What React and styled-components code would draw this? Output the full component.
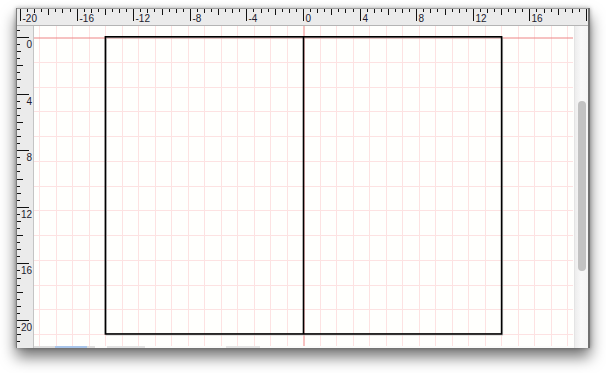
import React from 'react';
import styled, { createGlobalStyle } from 'styled-components';

const UNIT = 14.15;

const GlobalStyle = createGlobalStyle`
  html, body {
    margin: 0;
    background: #ffffff;
    font-family: "Liberation Sans", Arial, sans-serif;
  }
`;

const Stage = styled.div`
  padding: 8px 0 30px 16px;
`;

const Window = styled.div`
  position: relative;
  width: 571px;
  display: flex;
  flex-direction: column;
  border-left: 1px solid #7c7c7c;
  border-right: 2px solid #707070;
  background: #fefefc;
  box-shadow: 0 9px 14px rgba(0, 0, 0, 0.55), 0 0 4px rgba(0, 0, 0, 0.3);
`;

const TopRuler = styled.div`
  height: 16px;
  background: #ebebeb;
  border-top: 1px solid #9c9c9c;
  border-bottom: 1px solid #b4b4b4;

  svg {
    display: block;
  }
`;

const Body = styled.div`
  display: flex;
  height: 322px;
`;

const LeftRuler = styled.div`
  width: 16px;
  background: #ebebeb;
  border-right: 1px solid #c4c4c4;

  svg {
    display: block;
  }
`;

const CanvasColumn = styled.div`
  flex: 1;
  display: flex;
  flex-direction: column;
`;

const Canvas = styled.div`
  height: 320px;
  background: #fffffd;

  svg {
    display: block;
  }
`;

const HScroll = styled.div`
  height: 2px;
  display: flex;
  background: #fbfbfa;
`;

const Segment = styled.div`
  width: ${p => p.$w}px;
  background: ${p => p.$c};
`;

const VScroll = styled.div`
  width: 14px;
  padding: 75px 3px 0 3px;
  box-sizing: border-box;
  border-left: 1px solid #e4e4e4;
  background: linear-gradient(to right, #ededed, #f8f8f8 45%, #f4f4f4);
`;

const Thumb = styled.div`
  width: 8px;
  height: 170px;
  border-radius: 4px;
  background: #c2c2c2;
`;

const Label = styled.text`
  font-family: "Liberation Sans", Arial, sans-serif;
  font-size: 10px;
  fill: #1b1b2e;
`;

const tickLen = h => (h % 8 === 0 ? 12 : h % 4 === 0 ? 6 : h % 2 === 0 ? 4 : 3);

function HorizontalRuler() {
  const ticks = [];
  const labels = [];
  for (let h = -42; h <= 42; h++) {
    const x = 286 + (h / 2) * UNIT;
    if (x < 0 || x > 571) continue;
    const px = Math.round(x) + 0.5;
    ticks.push(<line key={h} x1={px} x2={px} y1={0} y2={tickLen(h)} stroke="#111" strokeWidth="1" />);
    if (h % 8 === 0 && px < 555) {
      labels.push(<Label key={'l' + h} x={px + 2} y={13}>{`${h / 2}`}</Label>);
    }
  }
  return (
    <svg width="571" height="16">
      {ticks}
      {labels}
    </svg>
  );
}

function VerticalRuler() {
  const ticks = [];
  const labels = [];
  for (let h = -1; h <= 46; h++) {
    const y = 11 + (h / 2) * UNIT;
    if (y < 0 || y > 322) continue;
    const py = Math.round(y) + 0.5;
    ticks.push(<line key={h} x1={0} x2={tickLen(h)} y1={py} y2={py} stroke="#111" strokeWidth="1" />);
    if (h % 8 === 0 && h >= 0) {
      labels.push(<Label key={'l' + h} x={15} y={py + 10} textAnchor="end">{`${h / 2}`}</Label>);
    }
  }
  return (
    <svg width="16" height="322">
      {ticks}
      {labels}
    </svg>
  );
}

function Drawing() {
  const W = 539;
  const H = 320;
  const ox = 269.5;
  const oy = 11.5;
  const lines = [];
  for (let k = -17; k <= 17; k++) {
    const x = Math.round(269 + k * 16.5) + 0.5;
    if (x < 0 || x > W || k === 0) continue;
    lines.push(<line key={'v' + k} x1={x} x2={x} y1={0} y2={H} stroke="#fde2e2" />);
  }
  for (let k = 1; k <= 13; k++) {
    const y = Math.round(11 + k * 24.75) + 0.5;
    if (y > H) continue;
    lines.push(<line key={'h' + k} x1={0} x2={W} y1={y} y2={y} stroke="#fde2e2" />);
  }
  const rx = ox - 14 * UNIT;
  const ry = 10.8;
  const rw = 28 * UNIT;
  const rh = 21 * UNIT;
  return (
    <svg width={W} height={H}>
      {lines}
      <line x1={ox + 0.5} x2={ox + 0.5} y1={0} y2={H} stroke="#ee8585" />
      <line x1={0} x2={W} y1={oy + 0.5} y2={oy + 0.5} stroke="#ee8585" />
      <rect x={rx + 1} y={ry + 1} width={rw} height={rh} fill="none" stroke="#c4c4c4" strokeWidth="1" />
      <rect x={rx} y={ry} width={rw} height={rh} fill="none" stroke="#000" strokeWidth="1.6" />
      <line x1={ox} x2={ox} y1={ry} y2={ry + rh} stroke="#000" strokeWidth="1.6" />
    </svg>
  );
}

export default function App() {
  return (
    <>
      <GlobalStyle />
      <Stage>
        <Window>
          <TopRuler>
            <HorizontalRuler />
          </TopRuler>
          <Body>
            <LeftRuler>
              <VerticalRuler />
            </LeftRuler>
            <CanvasColumn>
              <Canvas>
                <Drawing />
              </Canvas>
              <HScroll>
                <Segment $w={21} $c="#dedede" />
                <Segment $w={32} $c="#a9c5ea" />
                <Segment $w={8} $c="#dedede" />
                <Segment $w={12} $c="#fbfbfa" />
                <Segment $w={38} $c="#e2e2e2" />
                <Segment $w={81} $c="#fbfbfa" />
                <Segment $w={34} $c="#e4e4e4" />
              </HScroll>
            </CanvasColumn>
            <VScroll>
              <Thumb />
            </VScroll>
          </Body>
        </Window>
      </Stage>
    </>
  );
}
